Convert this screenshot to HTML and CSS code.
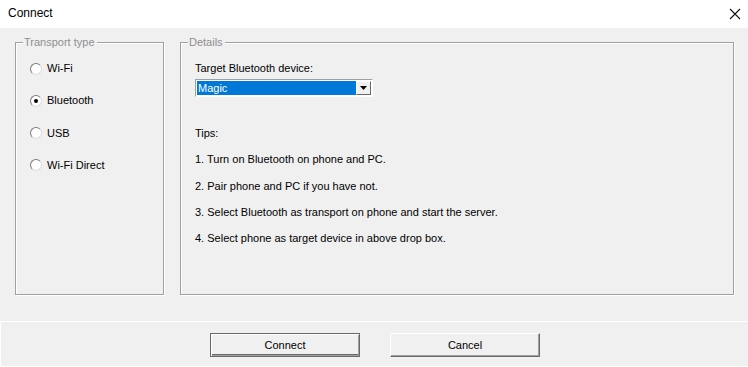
FILE: index.html
```html
<!DOCTYPE html>
<html lang="en">
<head>
    <meta charset="UTF-8">
    <title>Connect</title>
    <link rel="stylesheet" href="styles.css">
</head>
<body>
    <div class="window">
        <div class="titlebar">
            <span class="title">Connect</span>
            <span class="close">
                <svg width="12" height="12" viewBox="0 0 12 12"><path d="M1 1 L11 11 M11 1 L1 11" stroke="#111" stroke-width="1.1"/></svg>
            </span>
        </div>

        <div class="content">
            <fieldset class="group transport">
                <legend>Transport type</legend>
                <div class="radios">
                    <div class="radio"><span class="dot"></span>Wi-Fi</div>
                    <div class="radio"><span class="dot checked"></span>Bluetooth</div>
                    <div class="radio"><span class="dot"></span>USB</div>
                    <div class="radio"><span class="dot"></span>Wi-Fi Direct</div>
                </div>
            </fieldset>

            <fieldset class="group details">
                <legend>Details</legend>
                <div class="details-body">
                    <div class="label">Target Bluetooth device:</div>
                    <div class="combo">
                        <span class="combo-value">Magic</span>
                        <span class="combo-arrow">
                            <svg width="7" height="4" viewBox="0 0 7 4"><path d="M0 0 H7 L3.5 4 Z" fill="#000"/></svg>
                        </span>
                    </div>
                    <div class="tips">
                        <p>Tips:</p>
                        <p>1. Turn on Bluetooth on phone and PC.</p>
                        <p>2. Pair phone and PC if you have not.</p>
                        <p>3. Select Bluetooth as transport on phone and start the server.</p>
                        <p>4. Select phone as target device in above drop box.</p>
                    </div>
                </div>
            </fieldset>
        </div>

        <div class="footer">
            <button class="btn btn-default">Connect</button>
            <button class="btn">Cancel</button>
        </div>
    </div>
</body>
</html>
```

FILE: styles.css
```css
:root {
  --face: #f0f0f0;
  --line: #a0a0a0;
  --text: #000000;
  --select: #0078d7;
}
body {
  margin: 0;
  font-family: 'Liberation Sans', Arial, sans-serif;
  font-size: 11px;
  color: var(--text);
  background-color: var(--face);
}
.window {
  width: 748px;
  height: 367px;
  display: flex;
  flex-direction: column;
  overflow: hidden;
}
.titlebar {
  height: 28px;
  background-color: #ffffff;
  display: flex;
  align-items: center;
  justify-content: space-between;
  padding: 0 7px 2px 8px;
  box-sizing: border-box;
}
.title {
  font-size: 12px;
}
.close {
  display: flex;
  margin-top: 2px;
}
.content {
  height: 293px;
  display: flex;
  gap: 16px;
  padding: 8px 14px 26px 15px;
  box-sizing: border-box;
}

/* group boxes, etched look */
.group {
  margin: 0;
  padding: 0;
  border: 1px solid var(--line);
  box-shadow: 1px 1px 0 #ffffff, inset 1px 1px 0 #ffffff;
  min-width: 0;
}
.group legend {
  margin-left: 7px;
  padding: 0 2px 0 1px;
  line-height: 13px;
  color: #8f8f8f;
  background-color: var(--face);
}
.transport {
  width: 147px;
}
.details {
  flex: 1;
}
.radios {
  display: flex;
  flex-direction: column;
  gap: 19.3px;
  padding: 13px 0 0 14px;
}
.radio {
  display: flex;
  align-items: center;
  gap: 5px;
  line-height: 13px;
}
.dot {
  width: 10px;
  height: 10px;
  border-radius: 50%;
  background-color: #ffffff;
  border: 1px solid;
  border-color: #7a7a7a #dcdcdc #dcdcdc #7a7a7a;
  display: flex;
  align-items: center;
  justify-content: center;
}
.dot.checked::after {
  content: "";
  width: 4px;
  height: 4px;
  border-radius: 50%;
  background-color: #000000;
}

.details-body {
  padding: 13px 0 0 14px;
}
.label {
  line-height: 13px;
}
.combo {
  margin-top: 4px;
  width: 178px;
  height: 18px;
  box-sizing: border-box;
  border: 1px solid;
  border-color: #a0a0a0 #ffffff #ffffff #a0a0a0;
  background-color: #ffffff;
  padding: 1px;
  display: flex;
}
.combo-value {
  flex: 1;
  background-color: var(--select);
  color: #ffffff;
  padding-left: 1px;
  line-height: 14px;
}
.combo-arrow {
  width: 15px;
  box-sizing: border-box;
  background-color: var(--face);
  border: 1px solid;
  border-color: #ffffff #696969 #696969 #ffffff;
  display: flex;
  align-items: center;
  justify-content: center;
}
.tips {
  margin-top: 30px;
  display: flex;
  flex-direction: column;
  gap: 13.3px;
}
.tips p {
  margin: 0;
  line-height: 13px;
}

.footer {
  flex: 1;
  border-top: 1px solid #ffffff;
  border-left: 1px solid #ffffff;
  border-bottom: 1px solid #ffffff;
  display: flex;
  justify-content: center;
  align-items: flex-start;
  gap: 30px;
  padding-top: 11px;
  padding-left: 1px;
}
.btn {
  width: 150px;
  height: 24px;
  font-family: inherit;
  font-size: 11px;
  color: #000000;
  background-color: var(--face);
  border: 1px solid;
  border-color: #ffffff #696969 #696969 #ffffff;
  box-shadow: inset -1px -1px 0 #a0a0a0;
  padding: 0;
}
.btn-default {
  border: 1px solid #696969;
  box-shadow: inset 1px 1px 0 #ffffff, inset -1px -1px 0 #a0a0a0, inset 0 -2px 0 #696969;
}
```
